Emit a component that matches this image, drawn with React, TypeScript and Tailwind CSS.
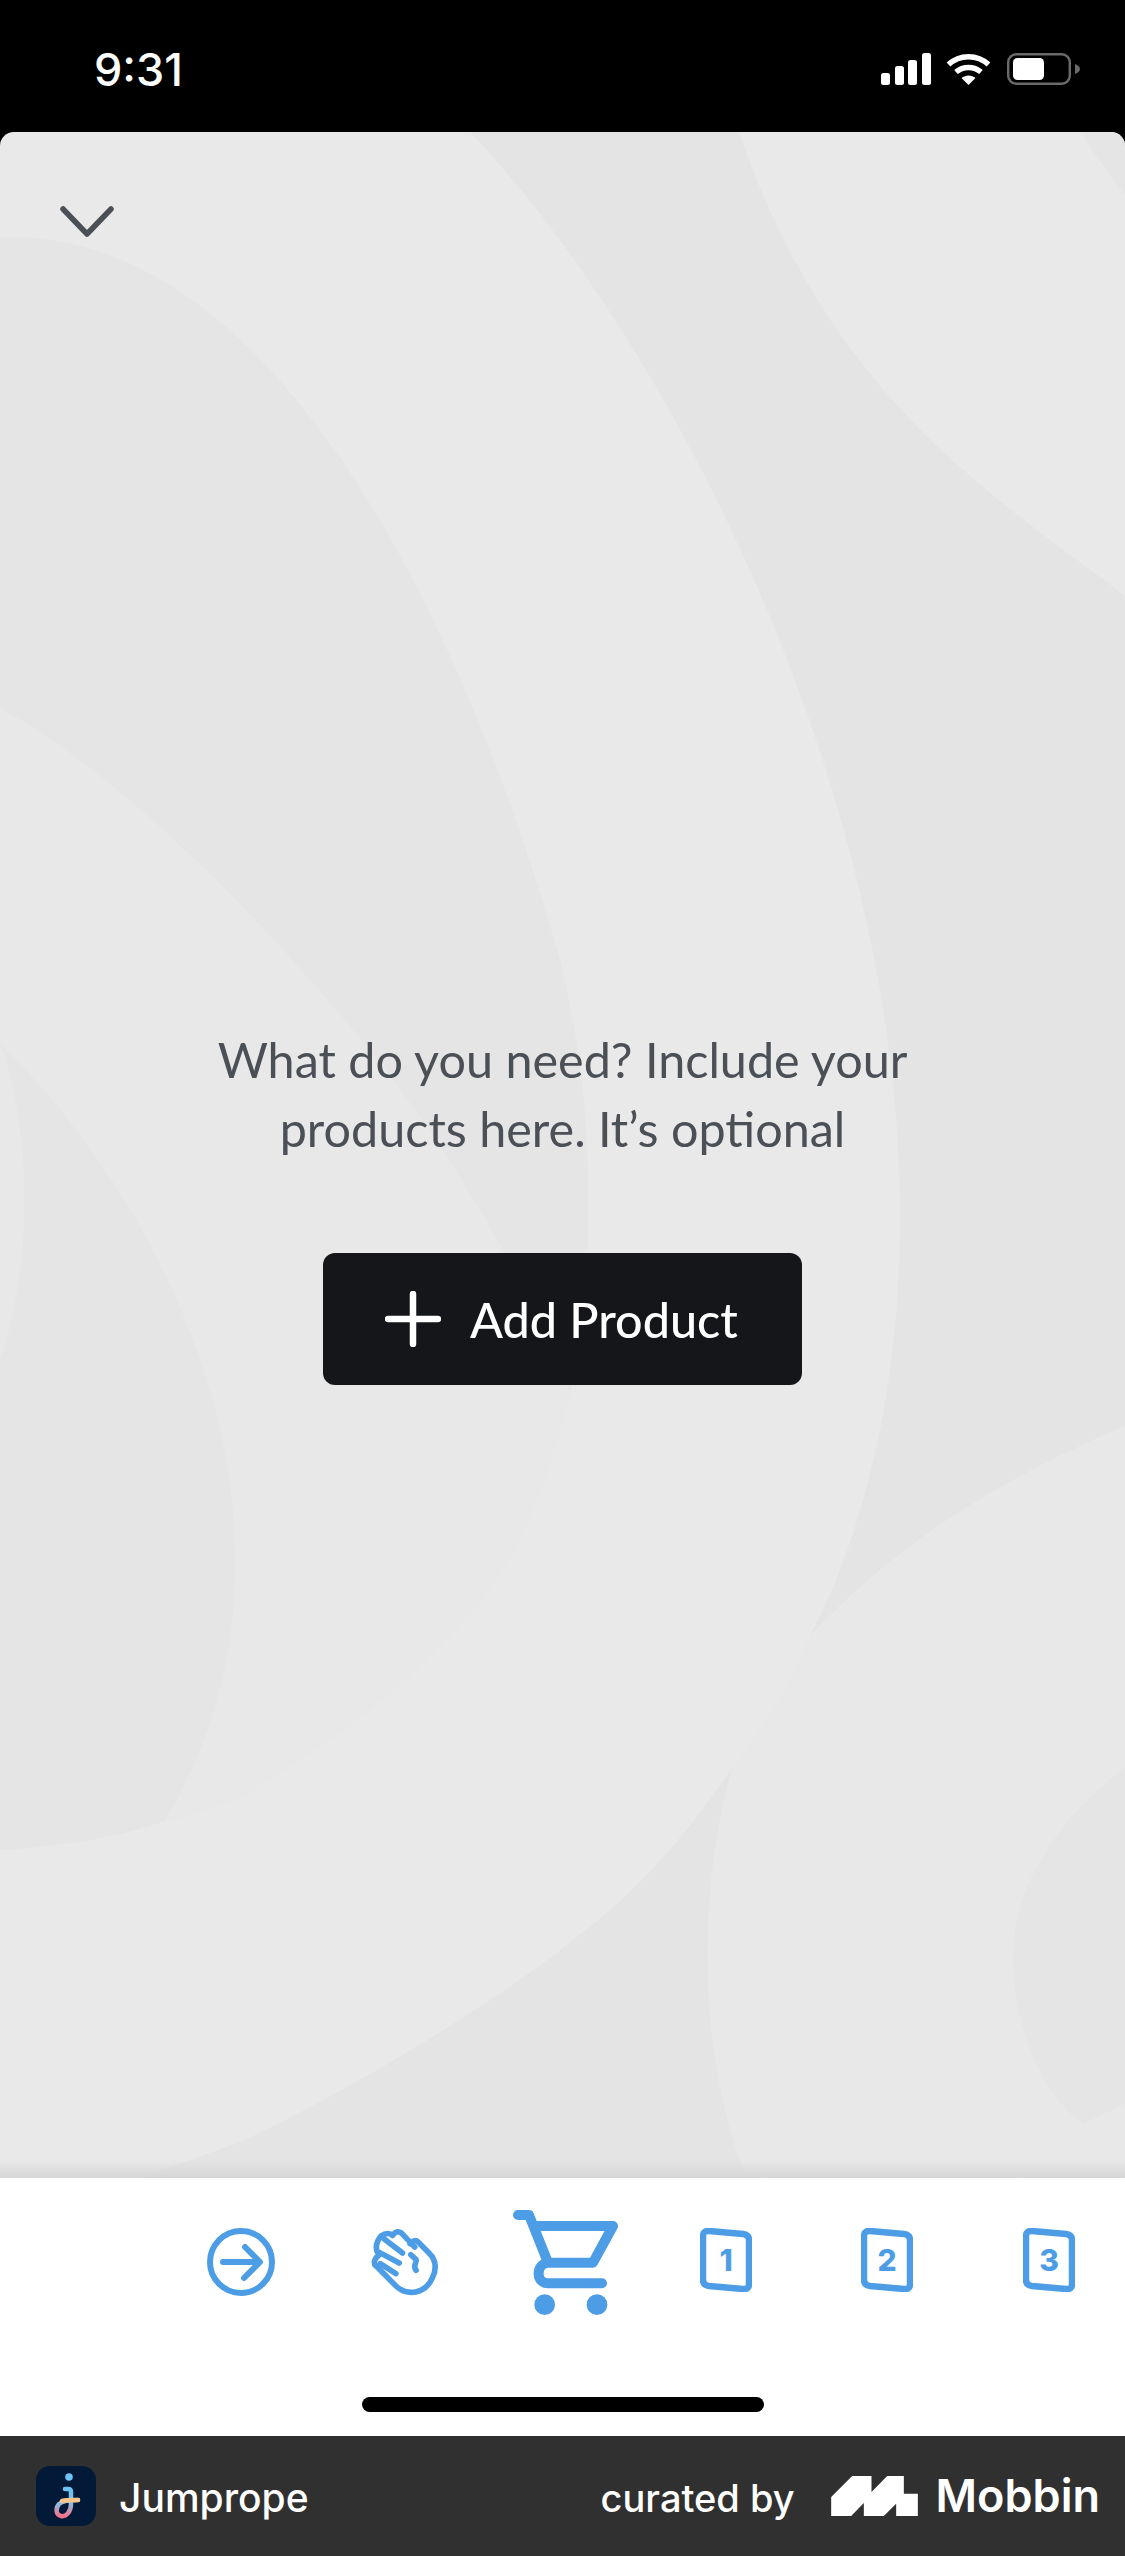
import React from "react";

const StatusIcons = () => (
  <div className="flex items-center">
    <svg width="50" height="32" viewBox="0 0 50 32" fill="#fff">
      <rect x="0" y="20" width="9" height="12" rx="2.5" />
      <rect x="14" y="13" width="9" height="19" rx="2.5" />
      <rect x="27" y="7" width="9" height="25" rx="2.5" />
      <rect x="41" y="0" width="9" height="32" rx="2.5" />
    </svg>
    <svg className="ml-[15px]" width="45" height="32" viewBox="0 0 45 32" fill="none" stroke="#fff" strokeWidth="5.5">
      <path d="M2.5 11.5C13.5 1 31.5 1 42.5 11.5" />
      <path d="M10 19C17 13 28 13 35 19" />
      <path d="M22.5 32L15.5 25C19.5 21.5 25.5 21.5 29.5 25Z" fill="#fff" stroke="none" />
    </svg>
    <svg className="ml-[16px]" width="74" height="32" viewBox="0 0 74 32" fill="none">
      <rect x="1.2" y="1.2" width="61.6" height="29.6" rx="8" stroke="#6a6a6a" strokeWidth="2.4" />
      <rect x="6" y="5" width="31" height="22" rx="4.5" fill="#fff" />
      <path d="M68 11C71 12 73 14 73 16C73 18 71 20 68 21Z" fill="#6a6a6a" />
    </svg>
  </div>
);

const SheetBackground = () => (
  <svg className="absolute inset-0 h-full w-full" viewBox="0 132 1125 2046" preserveAspectRatio="none">
    {/* top right band */}
    <path
      d="M470 132C660 330 900 780 900 1216C900 1400 860 1540 810 1636C900 1540 1000 1480 1125 1426V596C1000 500 830 400 739 132Z"
      fill="#e4e4e4"
    />
    <path d="M1080 132C1095 155 1110 175 1125 195V132Z" fill="#e5e5e5" />
    {/* left ring */}
    <path
      d="M0 238C240 225 440 540 560 960C580 1040 590 1130 588 1216C590 1260 584 1340 570 1393C555 1450 535 1515 502 1571C450 1650 360 1725 244 1795C170 1825 80 1845 0 1850Z"
      fill="#e5e5e5"
    />
    <path
      d="M0 708C130 780 270 930 359 1037C430 1120 530 1280 570 1393C555 1450 535 1515 502 1571C450 1650 360 1725 244 1795C170 1825 80 1845 0 1850Z"
      fill="#e8e8e8"
    />
    <path d="M0 1044C90 1130 210 1300 232 1500C245 1620 220 1730 165 1821C110 1840 50 1847 0 1850Z" fill="#e5e5e5" />
    <path d="M0 1044C30 1120 35 1260 0 1360Z" fill="#e8e8e8" />
    {/* bottom shapes */}
    <path d="M810 1636C900 1540 1000 1480 1125 1426V2178H746C700 2060 695 1900 732 1768C770 1720 790 1680 810 1636Z" fill="#e8e8e8" />
    <path d="M732 1768C690 1830 640 1890 574 1939C500 2000 350 2090 251 2137C210 2155 170 2165 140 2178H746C700 2060 695 1900 732 1768Z" fill="#e4e4e4" />
    <path d="M1125 1768C1080 1800 1050 1840 1033 1874C1005 1930 1005 2000 1040 2071C1055 2100 1070 2115 1083 2124L1125 2104Z" fill="#e5e5e5" />
  </svg>
);

const ArrowIcon = () => (
  <svg width="68" height="68" viewBox="0 0 68 68" fill="none" stroke="#4d9de6" strokeWidth="6" strokeLinecap="round" strokeLinejoin="round">
    <circle cx="34" cy="34" r="31" />
    <path d="M16 34H52M38 19L53 34L37 50" />
  </svg>
);

const HandIcon = () => (
  <svg width="68" height="69" viewBox="60 85 205 207" fill="none" stroke="#4d9de6" strokeWidth="17" strokeLinecap="round" strokeLinejoin="round">
    <path d="M72 195L138 262C175 292 225 280 245 235C262 200 250 175 235 160L205 130C195 118 185 122 178 132" />
    <path d="M72 195C68 185 72 175 85 165L78 155C72 135 82 118 92 107C105 98 118 100 125 107C135 92 145 95 152 100L192 142" />
    <path d="M100 118L155 160" />
    <path d="M85 158L145 190" />
    <path d="M88 192L135 222" />
    <path d="M180 165L196 180C200 190 184 195 196 212" />
  </svg>
);

const CartIcon = () => (
  <svg width="105" height="105" viewBox="490 30 315 315" fill="none">
    <path
      d="M505 45H538L595 188C560 190 555 250 595 250H757M560 78H790L730 188H595"
      stroke="#4d9de6"
      strokeWidth="30"
      strokeLinecap="round"
      strokeLinejoin="round"
    />
    <circle cx="585" cy="314" r="31" fill="#4d9de6" />
    <circle cx="742" cy="314" r="31" fill="#4d9de6" />
  </svg>
);

const TileIcon = ({ label }: { label: string }) => (
  <svg width="52" height="64" viewBox="0 0 52 64" fill="none">
    <path d="M9 3L43 6C47 6.500 49 8.500 49 12V56C49 59.500 47 61.500 43 61L9 58C5.500 57.500 3 55.500 3 52V8C3 4.500 5.500 2.700 9 3Z" stroke="#4d9de6" strokeWidth="6.5" />
    <text x="26" y="43" textAnchor="middle" fill="#4d9de6" fontSize="30" fontWeight="800" fontFamily="Inter, sans-serif">
      {label}
    </text>
  </svg>
);

const JumpropeLogo = () => (
  <div className="flex h-[60px] w-[60px] items-center justify-center rounded-[14px] bg-[#021a38]">
    <svg width="60" height="60" viewBox="0 0 60 60" fill="none">
      <defs>
        <linearGradient id="stem" x1="0" y1="0" x2="0" y2="1">
          <stop offset="0" stopColor="#6cc4f5" />
          <stop offset="0.55" stopColor="#8fb9dc" />
          <stop offset="1" stopColor="#f7728a" />
        </linearGradient>
      </defs>
      <circle cx="33" cy="11" r="3.8" fill="#6cc4f5" />
      <path d="M29 23H32C34 23 35 24 35 26V38C35 46 30 51 25 50C20 49 19 43 23 38C26 35 30 34 42 34" stroke="url(#stem)" strokeWidth="4.5" strokeLinecap="round" />
      <path d="M26 35C30 34 34 34 42 34" stroke="#fbc48a" strokeWidth="4.5" strokeLinecap="round" />
    </svg>
  </div>
);

const MobbinMark = () => (
  <svg width="87" height="40" viewBox="37 47 260 120" fill="#fff">
    <path d="M37 167V110L100 47H158V95L205 47H255V100H297V167H232V130L195 167H135V128L97 167Z" />
  </svg>
);

export default function App() {
  return (
    <div className="w-[1125px] h-[2556px] flex flex-col bg-black font-['Inter',sans-serif]">
      {/* Status bar */}
      <div className="h-[132px] flex items-center justify-between pt-[6px] pl-[94px] pr-[44px]">
        <span className="text-white text-[45px] font-medium leading-none">9:31</span>
        <StatusIcons />
      </div>

      {/* Sheet */}
      <div className="relative h-[2046px] overflow-hidden rounded-t-[14px] bg-[#e9e9e9]">
        <SheetBackground />
        <div className="absolute bottom-0 left-0 right-0 h-[18px] bg-linear-to-b from-transparent to-[#d6d6d6]" />
        <div className="relative flex flex-col font-['Lato',sans-serif]">
          <button className="pl-[58px] pt-[72px] self-start">
            <svg width="58" height="35" viewBox="0 0 58 35" fill="none" stroke="#4b4f56" strokeWidth="5.5" strokeLinecap="round" strokeLinejoin="round">
              <path d="M5 5L29 30L53 5" />
            </svg>
          </button>
          <p className="mt-[786px] text-center text-[48.5px] leading-[69px] text-[#4b4f56]">
            What do you need? Include your
            <br />
            products here. It’s optional
          </p>
          <button className="mt-[90px] mx-auto w-[479px] h-[132px] rounded-[12px] bg-[#14161a] text-white flex items-center pl-[62px]">
            <svg width="56" height="56" viewBox="0 0 56 56" fill="none" stroke="#fff" strokeWidth="6.5" strokeLinecap="round">
              <path d="M28 3V53M3 28H53" />
            </svg>
            <span className="ml-[29px] text-[48.5px] font-medium leading-none">Add Product</span>
          </button>
        </div>
      </div>

      {/* Tab icons */}
      <div className="h-[258px] bg-white flex flex-col pt-[32px]">
        <div className="h-[105px] flex pl-[207px] items-start">
          <div className="mt-[18px]"><ArrowIcon /></div>
          <div className="mt-[18px] ml-[96px]"><HandIcon /></div>
          <div className="ml-[74px]"><CartIcon /></div>
          <div className="mt-[18px] ml-[82px]"><TileIcon label="1" /></div>
          <div className="mt-[18px] ml-[109px]"><TileIcon label="2" /></div>
          <div className="mt-[18px] ml-[110px]"><TileIcon label="3" /></div>
        </div>
        <div className="mt-[82px] mx-auto h-[15px] w-[402px] rounded-full bg-black" />
      </div>

      {/* Footer */}
      <div className="h-[120px] bg-[#303030] flex items-center justify-between pl-[36px] pr-[25px] text-white">
        <div className="flex items-center">
          <JumpropeLogo />
          <span className="ml-[23px] mt-[4px] text-[39px] font-medium">Jumprope</span>
        </div>
        <div className="flex items-center">
          <span className="mt-[4px] text-[38px] font-medium">curated by</span>
          <div className="ml-[36px]"><MobbinMark /></div>
          <span className="ml-[18px] text-[45px] font-semibold">Mobbin</span>
        </div>
      </div>
    </div>
  );
}
